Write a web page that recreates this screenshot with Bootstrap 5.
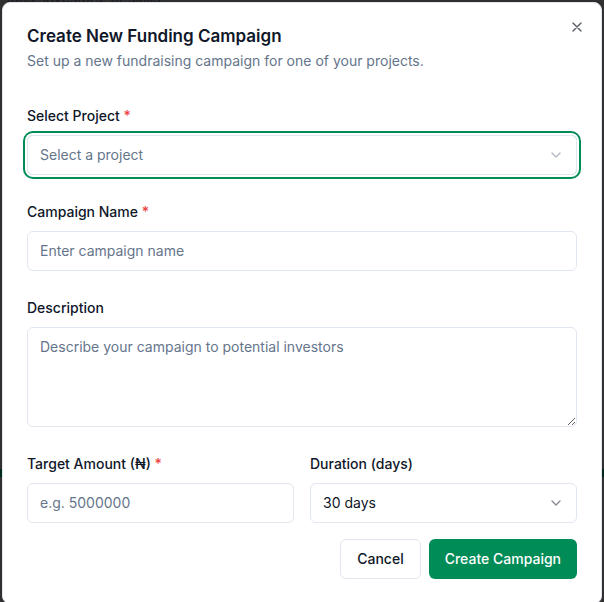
<!DOCTYPE html>
<html lang="en">
<head>
<meta charset="utf-8">
<meta name="viewport" content="width=device-width, initial-scale=1">
<title>Create New Funding Campaign</title>
<link rel="stylesheet" href="https://cdn.jsdelivr.net/npm/bootstrap@5.3.0/dist/css/bootstrap.min.css">
<style>
html{scrollbar-width:none}
body{background:#303030;font-family:Inter,"Noto Sans",sans-serif;font-size:14px;line-height:20px;color:#0f1729}
.page{padding:2px 2px 0}
.behind-text{position:absolute;left:7px;top:-12px;color:#1a1a1c;white-space:nowrap}
.behind-bar{position:absolute;left:0;right:0;top:469px;height:8px;background:#00291b}
.dialog-panel{background:#fff;border:1px solid #e1e7ef;border-radius:8px;padding:24px}
.dialog-title{font-size:17px;line-height:18px;font-weight:600;margin-bottom:6px}
.hint{color:#65758b}
.form-label{font-size:14px;line-height:20px;font-weight:500;margin-bottom:9px}
.req{color:#ef4343}
.form-control,.form-select{font-size:14px;line-height:20px;padding:9px 12px;border:1px solid #e1e7ef;border-radius:6px;color:#0f1729;min-height:40px}
.form-control::placeholder{color:#65758b;opacity:1}
.form-select{background-image:none}
.select-box svg{position:absolute;right:13px;top:12px;pointer-events:none;opacity:.5}
.focused{border-radius:6px;box-shadow:0 0 0 2px #fff,0 0 0 4px #008c57}
.focused .form-select{color:#65758b}
.focused svg{color:#65758b}
textarea.form-control{height:100px}
.close-x{position:absolute;right:16px;top:16px;line-height:0;color:#0f1729;opacity:.7}
.fields{gap:27px;padding-top:35px}
.btn{font-size:14px;line-height:20px;font-weight:500;padding:9px 16px;border-radius:6px}
.btn-plain{border-color:#e1e7ef;background:#fff;color:#0f1729}
.btn-create{background:#008c57;border:0;padding:10px 16px;color:#fff}
.btn-create:hover{background:#007a4c;color:#fff}
</style>
<script src="https://cdn.jsdelivr.net/npm/bootstrap@5.3.0/dist/js/bootstrap.bundle.min.js"></script>
</head>
<body>
<div class="page position-relative overflow-hidden">
<div class="behind-text" aria-hidden="true">ions, investors, or skills</div>
<div class="behind-bar" aria-hidden="true"></div>
<main class="dialog-panel position-relative" role="dialog" aria-labelledby="title">
<button type="button" class="close-x border-0 bg-transparent p-0" aria-label="Close"><svg width="16" height="16" viewBox="0 0 24 24" fill="none" stroke="currentColor" stroke-width="2" stroke-linecap="round"><path d="M18 6 6 18M6 6l12 12"/></svg></button>
<h1 class="dialog-title" id="title">Create New Funding Campaign</h1>
<p class="hint mb-0">Set up a new fundraising campaign for one of your projects.</p>
<form>
<div class="d-flex flex-column fields">
<div>
<label class="form-label" for="project">Select Project <span class="req">*</span></label>
<div class="position-relative select-box focused"><select class="form-select" id="project"><option>Select a project</option></select><svg width="16" height="16" viewBox="0 0 24 24" fill="none" stroke="currentColor" stroke-width="2" stroke-linecap="round" stroke-linejoin="round"><path d="m6 9 6 6 6-6"/></svg></div>
</div>
<div>
<label class="form-label" for="name">Campaign Name <span class="req">*</span></label>
<input class="form-control" id="name" type="text" placeholder="Enter campaign name">
</div>
<div>
<label class="form-label" for="desc">Description</label>
<textarea class="form-control d-block" id="desc" placeholder="Describe your campaign to potential investors"></textarea>
</div>
<div class="row gx-3">
<div class="col-6">
<label class="form-label" for="amount">Target Amount (₦) <span class="req">*</span></label>
<input class="form-control" id="amount" type="text" placeholder="e.g. 5000000">
</div>
<div class="col-6">
<label class="form-label" for="days">Duration (days)</label>
<div class="position-relative select-box"><select class="form-select" id="days"><option>30 days</option></select><svg width="16" height="16" viewBox="0 0 24 24" fill="none" stroke="currentColor" stroke-width="2" stroke-linecap="round" stroke-linejoin="round"><path d="m6 9 6 6 6-6"/></svg></div>
</div>
</div>
</div>
<div class="d-flex justify-content-end gap-2 mt-3">
<button type="button" class="btn btn-plain">Cancel</button>
<button type="submit" class="btn btn-create">Create Campaign</button>
</div>
</form>
</main>
</div>
</body>
</html>
